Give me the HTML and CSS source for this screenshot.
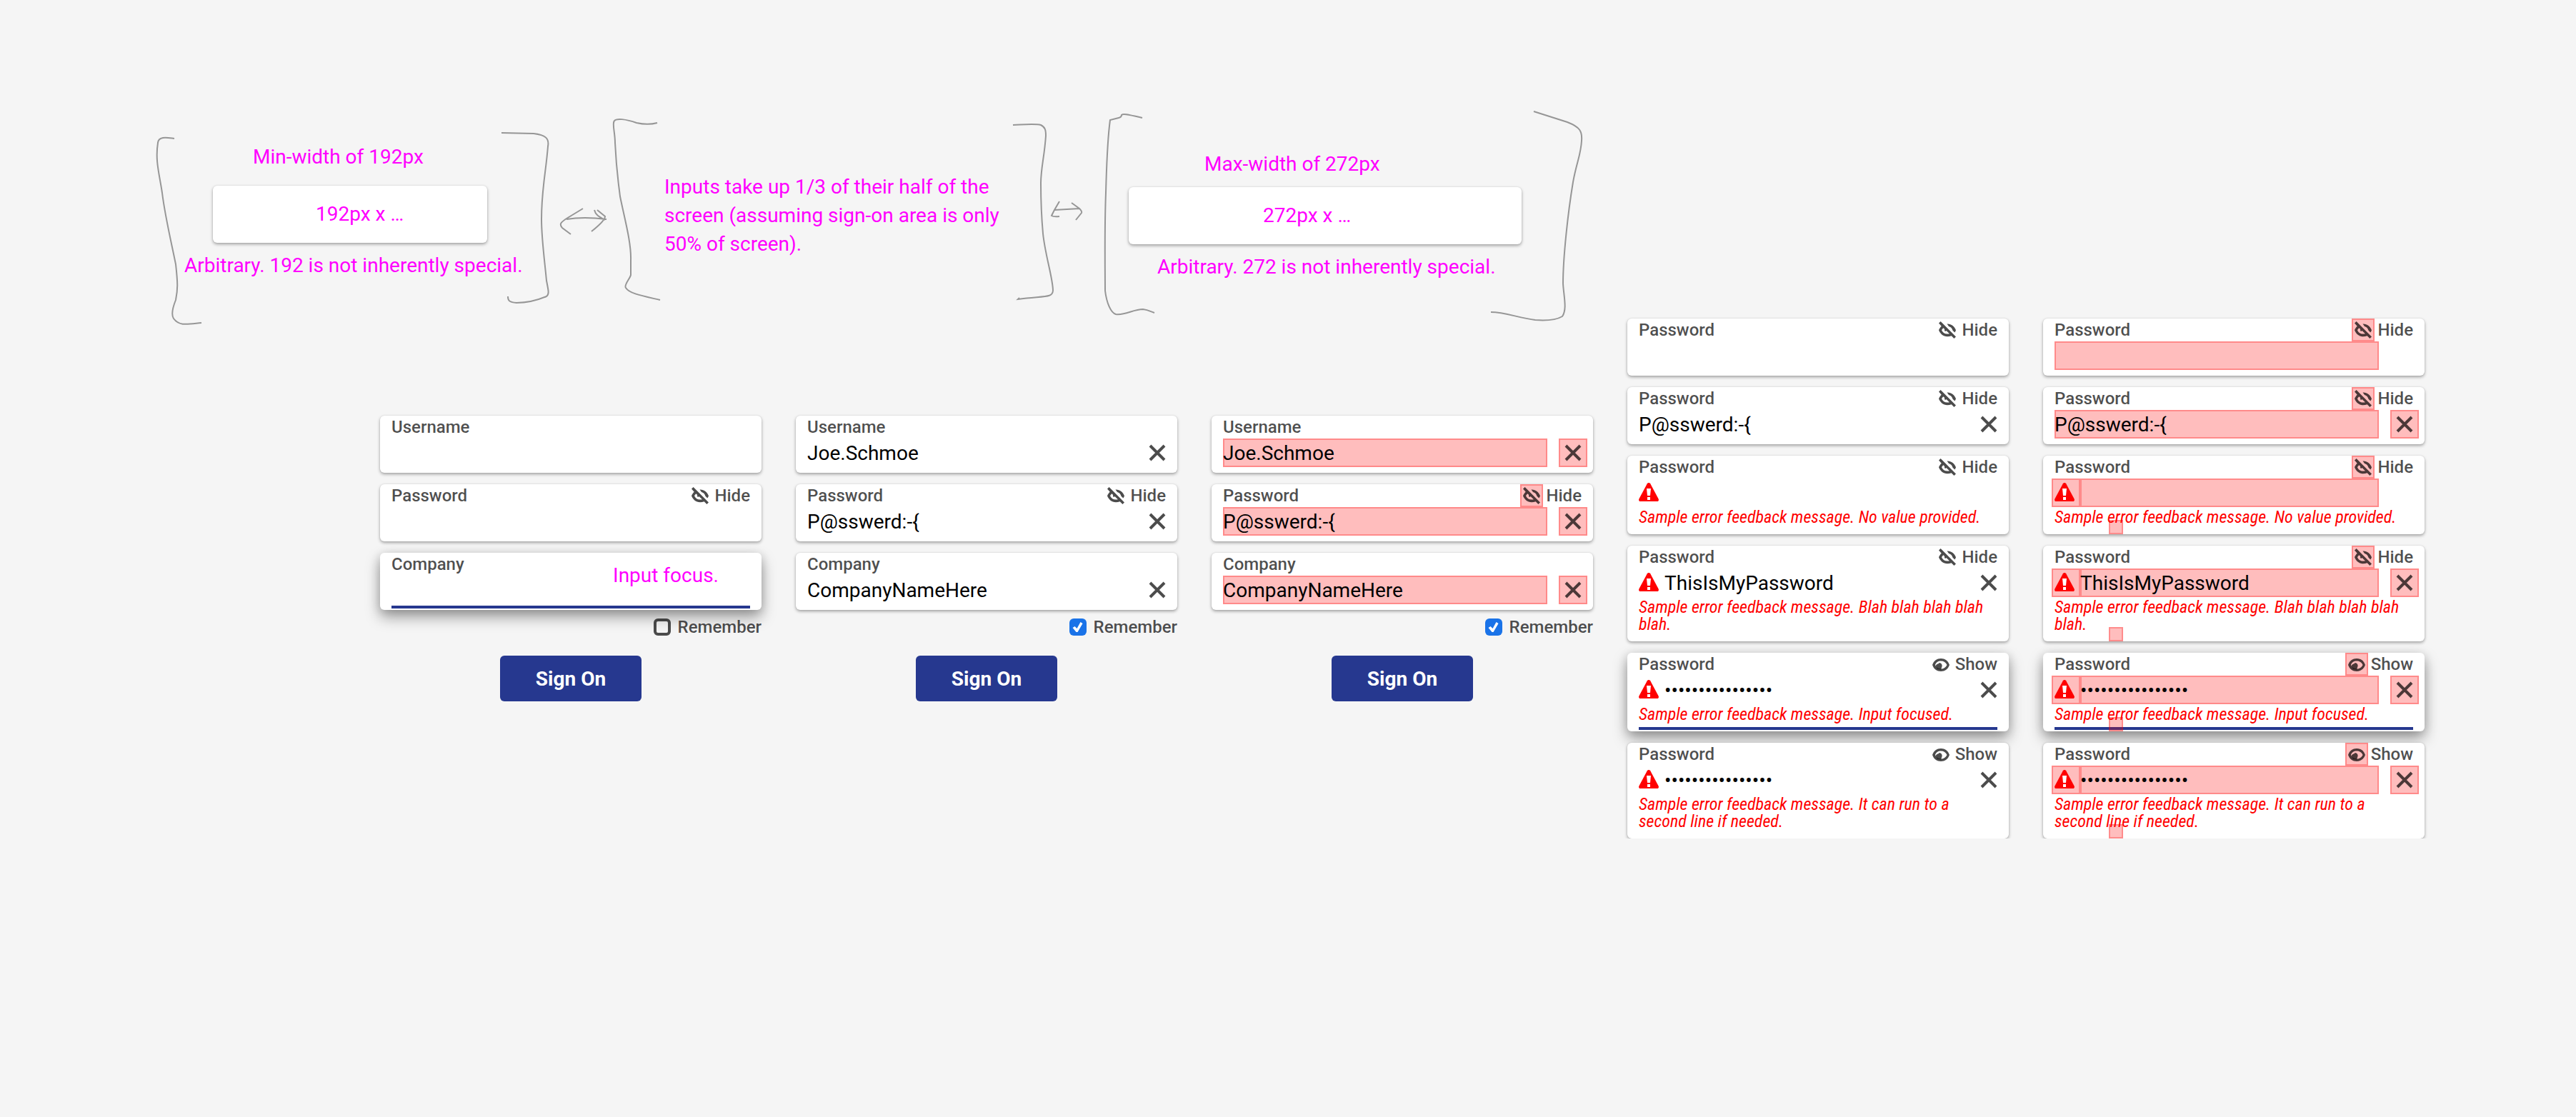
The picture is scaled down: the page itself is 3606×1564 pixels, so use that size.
FILE: index.html
```html
<!DOCTYPE html>
<html lang="en">
<head>
<meta charset="utf-8">
<title>Sign On inputs</title>
<link rel="stylesheet" href="styles.css">
</head>
<body>
<svg class="sprite" aria-hidden="true">
  <symbol id="i-x" viewBox="0 0 24 24"><path d="M2 2L22 22M22 2L2 22" fill="none" stroke="currentColor" stroke-width="4"/></symbol>
  <symbol id="i-eye" viewBox="0 0 24 24"><path fill="currentColor" fill-rule="evenodd" d="M0 13C2 7 6.500 4 12 4S22 7 24 13C22 19 17.500 22 12 22S2 19 0 13ZM4 13C5 16.500 8 18.500 12 18.500S19 16.500 20.500 13C19 9.500 16 7.500 12 7.500S5 9.500 4 13Z"/><path fill="currentColor" d="M4.500 14.500C5.500 12 7.500 11.500 8.500 11.500C8.500 10.300 10 9.800 11.500 10.500C13.500 11.500 14.200 14 13.200 16L12 19.500L7 18.500Z"/></symbol>
  <symbol id="i-off" viewBox="0 0 24 24"><path fill="currentColor" d="M0 2.600L2.600 0L24 21.400L21.400 24L17.700 20.200C16 20.900 14 21.200 12 21.200C6 21.200 2 17.500 0 12.300C.8 10.200 1.900 8.400 3.700 6.700ZM6.300 9.300C5.200 10.200 4.500 11.200 4 12.300C5.500 15.700 8.200 17.600 12 17.600C13 17.600 14 17.500 14.900 17.300L10.500 13C9.500 14.500 8.200 13.800 8 12.500C7.900 11.900 8 11.300 8.200 11Z" fill-rule="evenodd"/><path fill="currentColor" d="M11.500 3.600C17.500 3.300 22 7 24 12.300C23.600 13.500 23 14.500 22.300 15.500L19.500 12.800C18.500 9.500 16.500 7.700 14 7.100Z"/></symbol>
  <symbol id="i-warn" viewBox="0 0 28 26"><path fill="#f00" d="M11.800 1.200C12.800-.4 15.200-.4 16.200 1.200L27.600 22.600C28.400 24.400 27.600 26 25.800 26H2.200C.4 26-.4 24.400.4 22.600Z"/><path fill="#fff" d="M11 8H17L16 18H12ZM12 20H16V24H12Z"/></symbol>
</svg>

<main class="board">
  <div class="board-main">
    <header class="notes">
      <svg class="sketch" viewBox="0 0 2230 582" preserveAspectRatio="none" aria-hidden="true">
        <path d="M244 194C235 193 222 190 221 200C217 225 223 243 227 270C231 303 240 340 246 370C249 397 249 405 246 420C242 430 239 440 243 446C251 457 262 454 282 452"/>
        <path d="M702 186L747 187C764 189 769 194 767 205C764 243 758 265 758 307C758 335 763 370 765 393C768 408 769 412 765 415C751 421 738 424 723 424C714 423 711 422 711 415"/>
        <path d="M816 292L793 306C784 312 783 314 787 319L799 328M793 307Q817 303 849 307M832 294C834 302 840 304 847 308M836 294L847 303Q847 309 828 324"/>
        <path d="M920 172C913 174 904 175 891 172C880 168 859 163 859 172C858 178 861 188 861 200C863 240 865 250 868 275C874 305 884 340 883 365L883 385C882 390 873 399 876 403C881 411 898 414 924 420"/>
        <path d="M1418 175C1440 174 1450 173 1457 175C1463 178 1464 182 1464 190C1462 220 1457 235 1457 257C1457 280 1458 305 1460 327C1463 357 1474 390 1474 407C1473 417 1465 414 1425 419L1427 417"/>
        <path d="M1483 282L1476 294L1472 302Q1475 304 1483 303M1476 294L1511 292M1500 284L1511 292Q1515 296 1514 298L1506 308"/>
        <path d="M1599 165C1585 162 1573 158 1570 161Q1570 164 1566 165L1554 168C1551 190 1549 230 1548 270C1546 320 1547 380 1547 407C1549 424 1555 438 1562 440C1575 442 1586 433 1600 433C1608 434 1610 436 1616 438"/>
        <path d="M2147 156L2194 171C2212 178 2215 184 2214 197C2213 217 2207 227 2202 255C2195 297 2188 360 2188 397C2189 415 2194 433 2187 443C2177 449 2163 449 2149 448C2125 445 2107 437 2087 437"/>
      </svg>
      <section class="note note-min">
        <p class="note-head">Min-width of 192px</p>
        <div class="card sample sample-min">192px x …</div>
        <p class="note-foot">Arbitrary. 192 is not inherently special.</p>
      </section>
      <section class="note note-mid">
        <p>Inputs take up 1/3 of their half of the screen (assuming sign-on area is only 50% of screen).</p>
      </section>
      <section class="note note-max">
        <p class="note-head">Max-width of 272px</p>
        <div class="card sample sample-max">272px x …</div>
        <p class="note-foot">Arbitrary. 272 is not inherently special.</p>
      </section>
    </header>

    <div class="forms">
      <form class="stack">
        <div class="card field">
          <div class="top"><label for="u1">Username</label></div>
          <div class="entry"><input id="u1" type="text"></div>
        </div>
        <div class="card field">
          <div class="top"><label for="p1">Password</label><button type="button" class="toggle"><span class="hit"><svg class="icon"><use href="#i-off"/></svg></span>Hide</button></div>
          <div class="entry"><input id="p1" type="text"></div>
        </div>
        <div class="card field focused">
          <div class="top"><label for="c1">Company</label></div>
          <div class="entry"><input id="c1" type="text"></div>
          <span class="callout">Input focus.</span>
        </div>
        <label class="remember"><input type="checkbox">Remember</label>
        <button type="button" class="submit">Sign On</button>
      </form>

      <form class="stack">
        <div class="card field">
          <div class="top"><label for="u2">Username</label></div>
          <div class="entry"><input id="u2" type="text" value="Joe.Schmoe"><button type="button" class="clear" aria-label="Clear"><svg class="icon"><use href="#i-x"/></svg></button></div>
        </div>
        <div class="card field">
          <div class="top"><label for="p2">Password</label><button type="button" class="toggle"><span class="hit"><svg class="icon"><use href="#i-off"/></svg></span>Hide</button></div>
          <div class="entry"><input id="p2" type="text" value="P@sswerd:-{"><button type="button" class="clear" aria-label="Clear"><svg class="icon"><use href="#i-x"/></svg></button></div>
        </div>
        <div class="card field">
          <div class="top"><label for="c2">Company</label></div>
          <div class="entry"><input id="c2" type="text" value="CompanyNameHere"><button type="button" class="clear" aria-label="Clear"><svg class="icon"><use href="#i-x"/></svg></button></div>
        </div>
        <label class="remember"><input type="checkbox" checked>Remember</label>
        <button type="button" class="submit">Sign On</button>
      </form>

      <form class="stack areas">
        <div class="card field">
          <div class="top"><label for="u3">Username</label></div>
          <div class="entry"><input id="u3" type="text" value="Joe.Schmoe"><button type="button" class="clear" aria-label="Clear"><svg class="icon"><use href="#i-x"/></svg></button></div>
        </div>
        <div class="card field">
          <div class="top"><label for="p3">Password</label><button type="button" class="toggle"><span class="hit"><svg class="icon"><use href="#i-off"/></svg></span>Hide</button></div>
          <div class="entry"><input id="p3" type="text" value="P@sswerd:-{"><button type="button" class="clear" aria-label="Clear"><svg class="icon"><use href="#i-x"/></svg></button></div>
        </div>
        <div class="card field">
          <div class="top"><label for="c3">Company</label></div>
          <div class="entry"><input id="c3" type="text" value="CompanyNameHere"><button type="button" class="clear" aria-label="Clear"><svg class="icon"><use href="#i-x"/></svg></button></div>
        </div>
        <label class="remember"><input type="checkbox" checked>Remember</label>
        <button type="button" class="submit">Sign On</button>
      </form>
    </div>
  </div>

  <div class="states">
    <form class="stack">
      <div class="card field">
        <div class="top"><label for="s1">Password</label><button type="button" class="toggle"><span class="hit"><svg class="icon"><use href="#i-off"/></svg></span>Hide</button></div>
        <div class="entry"><input id="s1" type="text"></div>
      </div>
      <div class="card field">
        <div class="top"><label for="s2">Password</label><button type="button" class="toggle"><span class="hit"><svg class="icon"><use href="#i-off"/></svg></span>Hide</button></div>
        <div class="entry"><input id="s2" type="text" value="P@sswerd:-{"><button type="button" class="clear" aria-label="Clear"><svg class="icon"><use href="#i-x"/></svg></button></div>
      </div>
      <div class="card field invalid">
        <div class="top"><label for="s3">Password</label><button type="button" class="toggle"><span class="hit"><svg class="icon"><use href="#i-off"/></svg></span>Hide</button></div>
        <div class="entry"><span class="warn"><svg><use href="#i-warn"/></svg></span><input id="s3" type="text"></div>
        <p class="error">Sample error feedback message. No value provided.</p>
      </div>
      <div class="card field invalid">
        <div class="top"><label for="s4">Password</label><button type="button" class="toggle"><span class="hit"><svg class="icon"><use href="#i-off"/></svg></span>Hide</button></div>
        <div class="entry"><span class="warn"><svg><use href="#i-warn"/></svg></span><input id="s4" type="text" value="ThisIsMyPassword"><button type="button" class="clear" aria-label="Clear"><svg class="icon"><use href="#i-x"/></svg></button></div>
        <p class="error">Sample error feedback message. Blah blah blah blah blah.</p>
      </div>
      <div class="card field invalid focused">
        <div class="top"><label for="s5">Password</label><button type="button" class="toggle"><span class="hit"><svg class="icon"><use href="#i-eye"/></svg></span>Show</button></div>
        <div class="entry"><span class="warn"><svg><use href="#i-warn"/></svg></span><input id="s5" type="password" value="ThisIsMyPassword"><button type="button" class="clear" aria-label="Clear"><svg class="icon"><use href="#i-x"/></svg></button></div>
        <p class="error">Sample error feedback message. Input focused.</p>
      </div>
      <div class="card field invalid">
        <div class="top"><label for="s6">Password</label><button type="button" class="toggle"><span class="hit"><svg class="icon"><use href="#i-eye"/></svg></span>Show</button></div>
        <div class="entry"><span class="warn"><svg><use href="#i-warn"/></svg></span><input id="s6" type="password" value="ThisIsMyPassword"><button type="button" class="clear" aria-label="Clear"><svg class="icon"><use href="#i-x"/></svg></button></div>
        <p class="error">Sample error feedback message. It can run to a second line if needed.</p>
      </div>
    </form>

    <form class="stack areas">
      <div class="card field">
        <div class="top"><label for="t1">Password</label><button type="button" class="toggle"><span class="hit"><svg class="icon"><use href="#i-off"/></svg></span>Hide</button></div>
        <div class="entry"><input id="t1" type="text"></div>
      </div>
      <div class="card field">
        <div class="top"><label for="t2">Password</label><button type="button" class="toggle"><span class="hit"><svg class="icon"><use href="#i-off"/></svg></span>Hide</button></div>
        <div class="entry"><input id="t2" type="text" value="P@sswerd:-{"><button type="button" class="clear" aria-label="Clear"><svg class="icon"><use href="#i-x"/></svg></button></div>
      </div>
      <div class="card field invalid">
        <div class="top"><label for="t3">Password</label><button type="button" class="toggle"><span class="hit"><svg class="icon"><use href="#i-off"/></svg></span>Hide</button></div>
        <div class="entry"><span class="warn"><svg><use href="#i-warn"/></svg></span><input id="t3" type="text"></div>
        <p class="error">Sample error feedback message. No value provided.</p>
      </div>
      <div class="card field invalid">
        <div class="top"><label for="t4">Password</label><button type="button" class="toggle"><span class="hit"><svg class="icon"><use href="#i-off"/></svg></span>Hide</button></div>
        <div class="entry"><span class="warn"><svg><use href="#i-warn"/></svg></span><input id="t4" type="text" value="ThisIsMyPassword"><button type="button" class="clear" aria-label="Clear"><svg class="icon"><use href="#i-x"/></svg></button></div>
        <p class="error">Sample error feedback message. Blah blah blah blah blah.</p>
      </div>
      <div class="card field invalid focused">
        <div class="top"><label for="t5">Password</label><button type="button" class="toggle"><span class="hit"><svg class="icon"><use href="#i-eye"/></svg></span>Show</button></div>
        <div class="entry"><span class="warn"><svg><use href="#i-warn"/></svg></span><input id="t5" type="password" value="ThisIsMyPassword"><button type="button" class="clear" aria-label="Clear"><svg class="icon"><use href="#i-x"/></svg></button></div>
        <p class="error">Sample error feedback message. Input focused.</p>
      </div>
      <div class="card field invalid">
        <div class="top"><label for="t6">Password</label><button type="button" class="toggle"><span class="hit"><svg class="icon"><use href="#i-eye"/></svg></span>Show</button></div>
        <div class="entry"><span class="warn"><svg><use href="#i-warn"/></svg></span><input id="t6" type="password" value="ThisIsMyPassword"><button type="button" class="clear" aria-label="Clear"><svg class="icon"><use href="#i-x"/></svg></button></div>
        <p class="error">Sample error feedback message. It can run to a second line if needed.</p>
      </div>
    </form>
  </div>
</main>
</body>
</html>
```
FILE: styles.css
```css
* {
  box-sizing: border-box;
}

:root {
  --ink: rgba(0, 0, 0, 0.7);
  --blue: #26388f;
  --note: #f0f;
  --area: rgba(255, 0, 0, 0.26);
  --area-line: #ff8a8a;
}

body {
  margin: 0;
  background: #f5f5f5;
  color: var(--ink);
  font-family: Roboto, "Liberation Sans", sans-serif;
  font-size: 24px;
}

p {
  margin: 0;
}

button,
input {
  font: inherit;
  color: inherit;
}

button {
  padding: 0;
  border: 0;
  background: none;
}

.sprite {
  display: none;
}

.board {
  display: grid;
  grid-template-columns: minmax(0, 2230fr) minmax(0, 1116fr);
  column-gap: 48px;
  padding-right: 212px;
}

/* Hand-drawn notes */
.notes {
  position: relative;
  display: grid;
  grid-template-columns: 672fr 650fr 650fr;
  align-items: start;
  height: 582px;
  padding: 200px 0 0 258px;
  color: var(--note);
  font-size: 28px;
  line-height: 40px;
}

.sketch {
  position: absolute;
  inset: 0;
  width: 100%;
  height: 100%;
  fill: none;
  stroke: #969696;
  stroke-width: 2;
}

.note {
  position: relative;
}

.note-head {
  padding-left: 96px;
}

.note-min {
  display: grid;
  gap: 20px;
}

.note-min .card {
  margin-left: 40px;
}

.note-min .note-foot {
  margin-top: -8px;
}

.note-mid {
  max-width: 500px;
  padding-top: 42px;
}

.note-max {
  display: grid;
  gap: 12px;
  padding-top: 10px;
}

.note-max .note-head {
  padding-left: 106px;
}

.note-max .note-foot {
  padding-left: 40px;
}

.sample {
  padding-block: 20px;
}

.sample-min {
  width: 384px;
  padding-left: 144px;
}

.sample-max {
  width: 550px;
  padding-left: 188px;
}

/* Columns */
.forms {
  display: grid;
  grid-template-columns: repeat(3, minmax(0, 1fr));
  gap: 48px;
  padding-left: 532px;
}

.states {
  display: grid;
  grid-template-columns: repeat(2, minmax(0, 1fr));
  align-items: start;
  gap: 48px;
  padding-top: 446px;
}

.stack {
  display: flex;
  flex-direction: column;
  gap: 16px;
}

/* Cards and fields */
.card {
  border-radius: 6px;
  background: #fff;
  box-shadow: 0 2px 4px rgba(0, 0, 0, 0.34), 0 0 2px rgba(0, 0, 0, 0.1);
}

.field {
  position: relative;
  padding: 0 8px 8px 16px;
}

.invalid {
  padding-bottom: 12px;
}

.focused {
  box-shadow: 0 10px 20px rgba(0, 0, 0, 0.36), 0 2px 14px rgba(0, 0, 0, 0.14);
}

.focused::after {
  content: "";
  position: absolute;
  right: 16px;
  bottom: 2px;
  left: 16px;
  height: 4px;
  background: var(--blue);
}

.top {
  display: flex;
  justify-content: space-between;
  height: 32px;
  padding-right: 8px;
  font-weight: 500;
  line-height: 32px;
}

.toggle {
  display: flex;
  gap: 4px;
}

.hit {
  display: grid;
  place-items: center;
  width: 32px;
  height: 32px;
}

.icon {
  display: block;
  width: 24px;
  height: 24px;
}

.entry {
  display: flex;
  height: 40px;
}

.entry input {
  flex: 1;
  min-width: 0;
  margin-right: 56px;
  padding: 0;
  border: 0;
  border-radius: 0;
  outline: 0;
  background: none;
  color: #000;
  font-size: 28px;
}

.entry input:not(:last-child) {
  margin-right: 16px;
}

.clear {
  display: grid;
  place-items: center;
  width: 40px;
}

.warn {
  width: 40px;
  margin-left: -4px;
  padding: 6px 4px;
}

.warn svg {
  display: block;
  width: 28px;
  height: 26px;
}

.error {
  padding: 2px 8px 0 0;
  color: #f00;
  font-family: "Roboto Condensed", Roboto, sans-serif;
  font-style: italic;
  line-height: 24px;
}

.callout {
  position: absolute;
  top: 16px;
  right: 60px;
  color: var(--note);
  font-size: 28px;
  line-height: 32px;
}

/* Touch areas tinted */
.areas .hit,
.areas .clear,
.areas .warn,
.areas .entry input {
  background: var(--area);
  box-shadow: inset 0 0 0 2px var(--area-line);
}

.areas .invalid::before {
  content: "";
  position: absolute;
  bottom: 0;
  left: 92px;
  z-index: 1;
  width: 16px;
  height: 16px;
  border: 2px solid rgba(255, 0, 0, 0.26);
  background: var(--area);
}

/* Remember and submit */
.remember {
  display: flex;
  align-items: center;
  align-self: flex-end;
  gap: 10px;
  height: 32px;
  margin-top: -8px;
  font-weight: 500;
}

.remember input {
  appearance: none;
  width: 24px;
  height: 24px;
  margin: 0;
  border: 4px solid #4b4b4b;
  border-radius: 6px;
}

.remember input:checked {
  border: 0;
  background: #1a73e8;
}

.remember input:checked::before {
  content: "";
  display: block;
  width: 24px;
  height: 24px;
  background: #fff;
  clip-path: polygon(5px 13px, 8px 11px, 11px 14px, 16px 5px, 19px 7px, 12px 19px, 10px 19px);
}

.submit {
  align-self: center;
  width: 198px;
  height: 64px;
  margin-top: 8px;
  border-radius: 6px;
  background: var(--blue);
  color: #fff;
  font-size: 28px;
  font-weight: 700;
}
```
